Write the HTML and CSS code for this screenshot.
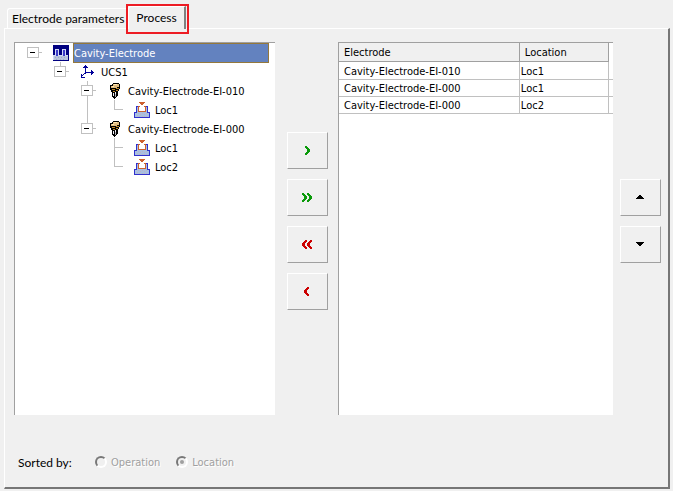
FILE: index.html
```html
<!DOCTYPE html>
<html lang="en">
<head>
<meta charset="utf-8">
<title>Electrode process</title>
<link rel="stylesheet" href="styles.css">
</head>
<body>
<svg class="defs" aria-hidden="true">
  <defs>
    <symbol id="minus" viewBox="0 0 27 19">
      <path d="M1.500 4.500h11v10h-11z" fill="#fff" stroke="#c0c0c0"/>
      <path d="M4 9.500h5" stroke="#000"/><path d="M13 9.500h3" stroke="#c0c0c0"/>
    </symbol>
    <symbol id="minus-first" viewBox="0 0 27 19">
      <use href="#minus"/><path d="M7.500 0v4" stroke="#c0c0c0"/>
    </symbol>
    <symbol id="minus-mid" viewBox="0 0 27 19">
      <use href="#minus-first"/><path d="M7.500 15v4" stroke="#c0c0c0"/>
    </symbol>
    <symbol id="line" viewBox="0 0 27 19"><path d="M7.500 0v19" stroke="#c0c0c0"/></symbol>
    <symbol id="tee" viewBox="0 0 27 19"><path d="M7.500 0v19M8 9.500h8" stroke="#c0c0c0"/></symbol>
    <symbol id="end" viewBox="0 0 27 19"><path d="M7.500 0v9.500h8.500" fill="none" stroke="#c0c0c0"/></symbol>
    <symbol id="project" viewBox="0 0 16 16">
      <path fill="#000080" d="M0 0h16v16H0z"/>
      <path fill="#b8c4dc" d="M1 11h14v4H1z"/>
      <path fill="#a0a8c8" d="M2 12h1v1H2zM5 12h1v1H5zM8 12h1v1H8zM11 12h1v1h-1zM3 14h1v1H3zM7 14h1v1H7zM10 14h1v1h-1z"/>
      <path fill="#3a3ac8" d="M3 5h2v6H3zM10 5h2v6h-2z"/>
      <path fill="#d0d8f4" d="M2 4h4v6h3V4h4v6h2v1h-3V5h-2v6H5V5H3v6H1v4H0v-5h2z"/>
    </symbol>
    <symbol id="axes" viewBox="0 0 16 16">
      <path fill="#000099" d="M5 1h1v1H5zM4 2h3v1H4zM3 3h5v1H3zM5 4h1v6H5zM5 8h9v1H5zM11 6h1v1h-1zM11 7h2v1h-2zM11 9h2v1h-2zM11 10h1v1h-1zM4 9h1v1H4zM3 10h1v1H3zM2 11h1v1H2zM1 10h1v3h3v1H1z"/>
    </symbol>
    <symbol id="tool" viewBox="0 0 16 16">
      <path fill="#000" d="M6 0h6v1h1v5h-1v2h-1v5h-1v1H9v1H8v1H7v-1H6v-1H5V9H4V7H3V2h2V1h1z"/>
      <path fill="#e0bc80" d="M6 1h6v3h-2v1H4V3h2z"/>
      <path fill="#ffe8b4" d="M7 1h3v1H7zM5 3h2v1H5z"/>
      <path fill="#c08828" d="M5 6h3v1H5zM9 5h3v1H9zM6 8h2v1H6zM9 7h2v1H9z"/>
      <path fill="#f0f0f8" d="M6 10h1v3H6zM8 9h1v2H8z"/><path fill="#b0b0b8" d="M8 11h1v3H8z"/>
    </symbol>
    <symbol id="place" viewBox="0 0 16 16">
      <path fill="#a8c0e0" d="M3 5h2v5h6V5h2v6h2v5H1v-5h2z"/>
      <path fill="#c0b0c4" d="M4 11h1v1H4zM6 12h1v1H6zM8 11h1v1H8zM10 12h1v1h-1zM12 11h1v1h-1zM3 13h1v1H3zM5 14h1v1H5zM8 14h1v1H8zM12 14h1v1h-1zM10 14h1v1h-1z"/>
      <path fill="#3030cc" d="M2 4h2v1H3v6H1v4h14v-4h-2V5h-1V4h2v6h2v6H0v-6h2z"/>
      <path fill="#cc6030" d="M5 0h6v1h-1v1H9v1H7V2H6V1H5zM4 4h2v1H5v4h6V5h-1V4h2v6H4z"/>
    </symbol>
  </defs>
</svg>

<main class="window">
  <div class="tabs" role="tablist">
    <button class="tab" type="button" role="tab" aria-selected="false">Electrode parameters</button>
    <button class="tab tab-active" type="button" role="tab" aria-selected="true">Process</button>
  </div>
  <section class="panel" role="tabpanel">
    <div class="workspace">
      <ul class="tree" role="tree">
        <li role="treeitem" aria-expanded="true">
          <div class="row"><svg class="guide"><use href="#minus"/></svg><svg class="icon"><use href="#project"/></svg><span class="name selected">Cavity-Electrode</span></div>
          <ul role="group">
            <li role="treeitem" aria-expanded="true">
              <div class="row level-1"><svg class="guide"><use href="#minus-first"/></svg><svg class="icon"><use href="#axes"/></svg><span class="name">UCS1</span></div>
              <ul role="group">
                <li role="treeitem" aria-expanded="true">
                  <div class="row level-2"><svg class="guide"><use href="#minus-mid"/></svg><svg class="icon"><use href="#tool"/></svg><span class="name">Cavity-Electrode-EI-010</span></div>
                  <ul role="group">
                    <li class="row level-2" role="treeitem"><svg class="guide"><use href="#line"/></svg><svg class="guide"><use href="#end"/></svg><svg class="icon"><use href="#place"/></svg><span class="name">Loc1</span></li>
                  </ul>
                </li>
                <li role="treeitem" aria-expanded="true">
                  <div class="row level-2"><svg class="guide"><use href="#minus-first"/></svg><svg class="icon"><use href="#tool"/></svg><span class="name">Cavity-Electrode-EI-000</span></div>
                  <ul role="group">
                    <li class="row level-3" role="treeitem"><svg class="guide"><use href="#tee"/></svg><svg class="icon"><use href="#place"/></svg><span class="name">Loc1</span></li>
                    <li class="row level-3" role="treeitem"><svg class="guide"><use href="#end"/></svg><svg class="icon"><use href="#place"/></svg><span class="name">Loc2</span></li>
                  </ul>
                </li>
              </ul>
            </li>
          </ul>
        </li>
      </ul>

      <div class="transfer">
        <button class="push add" type="button" aria-label="Add"><svg class="glyph" viewBox="0 0 12 9"><path d="M4 0h2v1h1v1h1v1h1v3H8v1H7v1H6v1H4V7h1V6h1V3H5V2H4z"/></svg></button>
        <button class="push add" type="button" aria-label="Add all"><svg class="glyph" viewBox="0 0 12 9"><path d="M1 0h2v1h1v1h1v1h1v3H5v1H4v1H3v1H1V7h1V6h1V3H2V2H1zM6 0h2v1h1v1h1v1h1v3h-1v1H9v1H8v1H6V7h1V6h1V3H7V2H6z"/></svg></button>
        <button class="push remove" type="button" aria-label="Remove all"><svg class="glyph" viewBox="0 0 12 9"><path d="M6 0H4v1H3v1H2v1H1v3h1v1h1v1h1v1h2V7H5V6H4V3h1V2h1zM11 0H9v1H8v1H7v1H6v3h1v1h1v1h1v1h2V7h-1V6H9V3h1V2h1z"/></svg></button>
        <button class="push remove" type="button" aria-label="Remove"><svg class="glyph" viewBox="0 0 12 9"><path d="M8 0H6v1H5v1H4v1H3v3h1v1h1v1h1v1h2V7H7V6H6V3h1V2h1z"/></svg></button>
      </div>

      <div class="list">
        <table>
          <colgroup><col class="col-electrode"><col class="col-location"><col class="col-rest"></colgroup>
          <thead><tr><th scope="col">Electrode</th><th scope="col">Location</th><td></td></tr></thead>
          <tbody>
            <tr><td>Cavity-Electrode-EI-010</td><td>Loc1</td><td></td></tr>
            <tr><td>Cavity-Electrode-EI-000</td><td>Loc1</td><td></td></tr>
            <tr><td>Cavity-Electrode-EI-000</td><td>Loc2</td><td></td></tr>
          </tbody>
        </table>
      </div>

      <div class="order">
        <button class="push" type="button" aria-label="Move up"><svg class="glyph" viewBox="0 0 12 9"><path d="M5 2h2v1h1v1h1v1h1v1H2V5h1V4h1V3h1z"/></svg></button>
        <button class="push" type="button" aria-label="Move down"><svg class="glyph" viewBox="0 0 12 9"><path d="M2 2h8v1H9v1H8v1H7v1H5V5H4V4H3V3H2z"/></svg></button>
      </div>
    </div>

    <div class="sorting" role="radiogroup" aria-labelledby="sort-title">
      <span class="sort-title" id="sort-title">Sorted by:</span>
      <label class="option"><input type="radio" name="sort" disabled>Operation</label>
      <label class="option"><input type="radio" name="sort" checked disabled>Location</label>
    </div>
  </section>
</main>
</body>
</html>
```

FILE: styles.css
```css
* {
  box-sizing: border-box;
}

body {
  margin: 0;
  background: #f0f0f0;
  color: #000;
  font-family: "DejaVu Sans Condensed", "DejaVu Sans", sans-serif;
  font-size: 11px;
  line-height: 17px;
}

ul {
  margin: 0;
  padding: 0;
  list-style: none;
}

button {
  font: inherit;
  color: inherit;
  background: #f0f0f0;
}

svg {
  display: block;
  flex: none;
  shape-rendering: crispEdges;
}

.defs {
  position: absolute;
  width: 0;
  height: 0;
}

.window {
  display: flex;
  flex-direction: column;
  min-height: 100vh;
  padding: 6px 3px 2px 4px;
}

/* Tabs */
.tabs {
  display: flex;
  align-items: flex-end;
  height: 22px;
  padding-left: 3px;
}

.tab {
  height: 20px;
  padding: 0 4px;
  border: 1px solid #fff;
  border-width: 1px 0 0 1px;
  border-radius: 3px 0 0 0;
  font-family: Lato, "Open Sans", sans-serif;
  font-size: 12px;
  line-height: 17px;
  white-space: nowrap;
}

.tab-active {
  position: relative;
  height: 23px;
  margin-bottom: -1px;
  padding: 0 7px 1px 7px;
  border-right: 2px solid #808080;
}

/* Red highlight around the current tab */
.tab-active::after {
  content: "";
  position: absolute;
  inset: -3px -5px -5px -3px;
  border: 2px solid #ed1c24;
}

.panel {
  flex: 1;
  display: flex;
  flex-direction: column;
  border: 1px solid #fff;
  border-right: 2px solid #767676;
  border-bottom: 2px solid #767676;
  padding: 13px 7px 0 9px;
}

.workspace {
  flex: 1;
  display: grid;
  grid-template-columns: 261fr auto 275fr auto;
}

/* Tree */
.tree {
  background: #fff;
  border: 1px solid #a0a0a0;
  border-width: 1px 0 0 1px;
  padding-right: 6px;
}

.row {
  display: flex;
  align-items: center;
  height: 19px;
  padding-left: 11px;
}

.level-1 { padding-left: 38px; }
.level-2 { padding-left: 65px; }
.level-3 { padding-left: 92px; }

.guide {
  width: 27px;
  height: 19px;
}

.icon {
  width: 16px;
  height: 16px;
}

.name {
  margin-left: 4px;
  padding: 2px 0 0 1px;
  white-space: nowrap;
}

.selected {
  flex: 1;
  padding: 1px 0 0;
  background: #6382bf;
  border: 1px solid #94783c;
  color: #fff;
}

/* Push buttons */
.transfer,
.order {
  display: flex;
  flex-direction: column;
  gap: 10px;
}

.transfer {
  padding: 90px 10px 0 12px;
}

.order {
  padding: 137px 0 0 7px;
}

.push {
  display: grid;
  place-items: center;
  width: 41px;
  height: 37px;
  padding: 0 2px 0 0;
  border: 1px solid #fff;
  border-right-color: #a0a0a0;
  border-bottom-color: #a0a0a0;
}

.glyph {
  width: 12px;
  height: 9px;
}

.add { fill: #0a9a0a; }
.remove { fill: #cc0000; }

/* Electrode table */
.list {
  background: #fff;
  border: 1px solid #a0a0a0;
  border-width: 1px 0 0 1px;
}

table {
  width: 100%;
  table-layout: fixed;
  border-collapse: separate;
  border-spacing: 0;
}

.col-electrode { width: 66%; }
.col-rest { width: 4px; }

th,
td {
  height: 17px;
  padding: 2px 0 0 1px;
  border: 1px solid #c0c0c0;
  border-width: 0 1px 1px 0;
  font-weight: normal;
  line-height: 14px;
  text-align: left;
  white-space: nowrap;
}

th {
  height: 19px;
  padding-left: 5px;
  background: #f0f0f0;
  border-color: #a0a0a0;
}

td:first-child,
th:first-child {
  padding-left: 5px;
}

td:last-child {
  padding: 0;
  border-right: 0;
}

thead td {
  border: 0;
}

tbody tr:first-child td {
  height: 18px;
}

/* Sorting */
.sorting {
  display: flex;
  align-items: center;
  height: 72px;
  padding: 22px 0 0 4px;
}

.sort-title {
  width: 77px;
  font-family: Lato, "Open Sans", sans-serif;
  font-size: 12px;
}

.option {
  display: flex;
  align-items: center;
  gap: 4px;
  margin-right: 16px;
  color: #a0a0a0;
  text-shadow: 1px 1px #fff;
}

input[type="radio"] {
  appearance: none;
  display: grid;
  place-items: center;
  width: 12px;
  height: 12px;
  margin: 0;
  border: 2px solid #787878;
  border-right-color: #fff;
  border-bottom-color: #fff;
  border-radius: 50%;
}

input[type="radio"]:checked::before {
  content: "";
  width: 4px;
  height: 4px;
  border-radius: 50%;
  background: #a0a0a0;
}
```
